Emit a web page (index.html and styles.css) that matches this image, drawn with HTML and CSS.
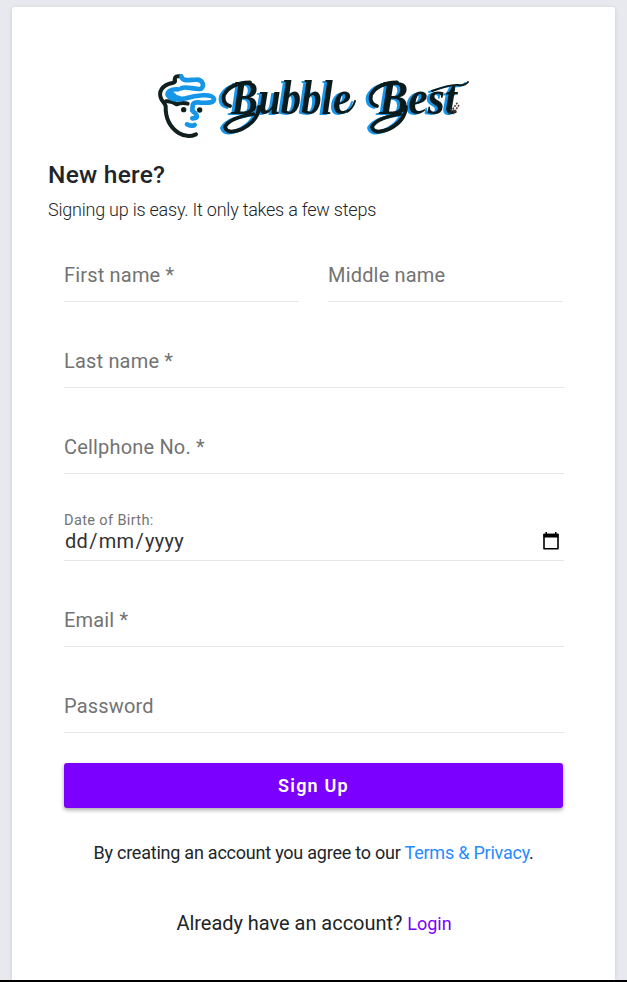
FILE: index.html
```html
<!DOCTYPE html>
<html lang="en">
<head>
<meta charset="utf-8">
<title>Bubble Best - Sign Up</title>
<link rel="stylesheet" href="styles.css">
</head>
<body>
<main class="card">
  <svg class="logo" viewBox="0 0 330 80" role="img" aria-label="Bubble Best">
    <g class="head" transform="scale(.33333)">
      <path class="ink" d="M91 34Q75 31 74 43Q80 50 67 54C35 60 25 82 33 100C37 111 44 113 47 123C46 158 60 187 86 204Q112 220 138 208M48 109Q66 107 80 118Q96 111 113 116"/>
      <path class="blue" d="M94 34C97 51 118 44 139 44C158 43 165 64 153 71C135 76 108 61 94 70M84 73C63 71 48 82 54 91C64 108 87 105 108 100C135 91 188 84 192 102C192 116 168 113 151 113Q130 109 128 122L127 137Q148 154 136 159L127 160M111 178Q122 185 134 180"/>
      <path class="blue" d="M66 86Q76 98 89 100"/>
      <circle cx="101" cy="134" r="8"/><circle cx="149" cy="135" r="8"/>
    </g>
    <g class="word">
      <text y="49"><tspan x="81" textLength="120" lengthAdjust="spacingAndGlyphs">Bubble</tspan> <tspan x="229" textLength="78" lengthAdjust="spacingAndGlyphs">Best</tspan></text>
      <g class="swash">
        <path d="M100 17.500Q80 18 74 30Q72 39 80 41M109 42Q108 56 92 64Q77 70 75 62Q79 53 103 49"/>
        <path d="M247 17.500Q227 18 221 30Q219 39 227 41M256 42Q255 56 239 64Q224 70 222 62Q226 53 250 49"/>
        <path class="thin" d="M197 47Q203 43 205 36M282 26Q301 19 308 20T318 17"/>
      </g>
    </g>
    <path class="mark" d="M299 49L308 37M303 49L309 40M300 44L306 46"/>
  </svg>
  <h1>New here?</h1>
  <p class="intro">Signing up is easy. It only takes a few steps</p>
  <form>
    <div class="row">
      <label class="field">First name *</label>
      <label class="field">Middle name</label>
    </div>
    <label class="field">Last name *</label>
    <label class="field">Cellphone No. *</label>
    <div class="field date">
      <span class="caption">Date of Birth:</span>
      <div class="value"><span class="format">dd<i>/</i>mm<i>/</i>yyyy</span>
        <svg class="calendar" viewBox="0 0 16 18"><path d="M1 2.5h14v14.2H1z" fill="none" stroke="#000" stroke-width="1.6" stroke-linejoin="round"/><path d="M.6 1.8h14.8V5.500H.6zM2.500 0h1.500v2H2.500zM12 0h1.500v2H12z"/></svg>
      </div>
    </div>
    <label class="field">Email *</label>
    <label class="field">Password</label>
    <button type="button">Sign Up</button>
  </form>
  <p class="terms">By creating an account you agree to our <a>Terms &amp; Privacy</a>.</p>
  <p class="login">Already have an account? <a>Login</a></p>
</main>
</body>
</html>
```

FILE: styles.css
```css
* { box-sizing: border-box; }
body {
  margin: 0;
  height: 982px;
  padding: 7px 12px 0;
  overflow: hidden;
  background: #e8e9ef;
  border-bottom: 2px solid #000;
  font-family: Roboto, sans-serif;
  color: #212529;
}
.card {
  height: 973px;
  padding: 58px 36px 0;
  background: #fff;
  border-radius: 3px 3px 0 0;
  box-shadow: 0 1px 4px rgba(0, 0, 0, .13);
}
.logo { display: block; width: 330px; height: 80px; margin-left: 102px; }
.head path { fill: none; stroke-linecap: round; stroke-linejoin: round; }
.head .ink { stroke: #10201e; stroke-width: 12; }
.head .blue { stroke: #1596e8; stroke-width: 14; }
.head circle { fill: #10201e; }
.word {
  font: italic bold 48px "Liberation Serif", serif;
  fill: #0b1b1c;
  filter: drop-shadow(-2.5px 1.500px 0 #1596e8);
}
.swash { fill: none; stroke: #0b1b1c; stroke-width: 3.800; stroke-linecap: round; }
.swash .thin { stroke-width: 2; }
.mark { stroke: #4c3933; stroke-width: 1.5; stroke-dasharray: 2 1; }
h1 { margin: 14px 0 0; font-size: 24.5px; line-height: 32px; font-weight: 500; letter-spacing: .25px; }
.intro { margin: 6px 0 0; font-size: 18px; line-height: 26px; font-weight: 300; letter-spacing: -.23px; }
form { padding: 0 15px 0 16px; margin-top: 25px; }
.row { display: grid; grid-template-columns: 235px 235px; column-gap: 29px; }
.field {
  display: block;
  height: 54px;
  margin-bottom: 32px;
  padding-top: 13px;
  border-bottom: 1px solid #e7e7eb;
  font-size: 20px;
  line-height: 28px;
  letter-spacing: .18px;
  color: #737373;
}
.date { height: 55px; padding-top: 6px; }
.caption { display: block; font-size: 14.5px; line-height: 18px; letter-spacing: .38px; }
.value { display: flex; justify-content: space-between; color: #333; line-height: 23px; padding: 0 5px 0 1px; letter-spacing: .3px; }
.format i { font-style: normal; padding: 0 1px; }
.calendar { width: 16px; height: 18px; margin-top: 2px; }
button {
  display: block;
  width: 499px;
  height: 45px;
  margin-top: -2px;
  border: 0;
  border-radius: 3px;
  background: #7b00ff;
  color: #fff;
  font: 600 18px Roboto, sans-serif;
  letter-spacing: 1.2px;
  box-shadow: 0 2px 4px rgba(0, 0, 0, .35);
}
.terms { margin: 32px 0 0; text-align: center; font-size: 18px; line-height: 26px; letter-spacing: -.23px; }
.terms a { color: #278bff; }
.login { margin: 43px 0 0; padding-left: 1px; text-align: center; font-size: 20px; line-height: 28px; letter-spacing: -.03px; }
.login a { color: #7b00ff; font-size: 18px; }
```
